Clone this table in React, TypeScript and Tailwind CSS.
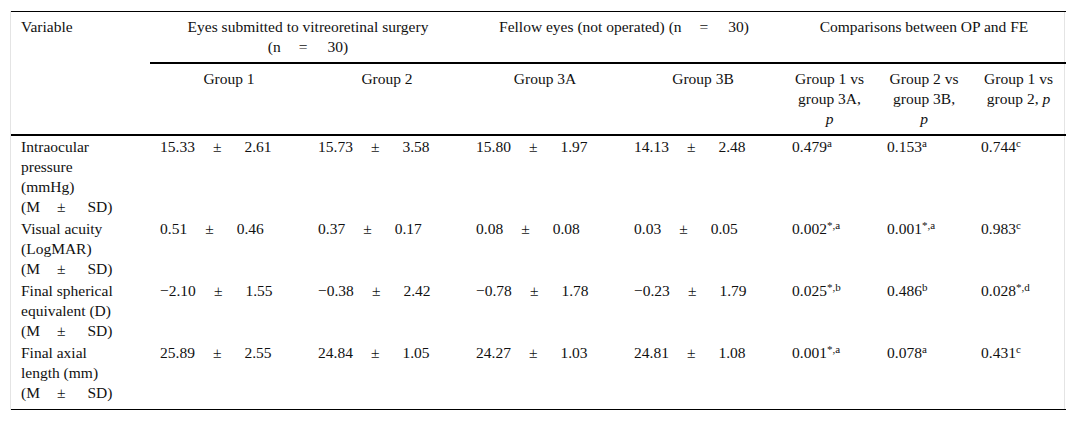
import React from 'react';

type Cell = { mean: string; sd: string };

interface Row {
  label: string[];
  groups: Cell[];
  pvalues: { value: string; note: string }[];
}

const rows: Row[] = [
  {
    label: ['Intraocular', 'pressure', '(mmHg)'],
    groups: [
      { mean: '15.33', sd: '2.61' },
      { mean: '15.73', sd: '3.58' },
      { mean: '15.80', sd: '1.97' },
      { mean: '14.13', sd: '2.48' },
    ],
    pvalues: [
      { value: '0.479', note: 'a' },
      { value: '0.153', note: 'a' },
      { value: '0.744', note: 'c' },
    ],
  },
  {
    label: ['Visual acuity', '(LogMAR)'],
    groups: [
      { mean: '0.51', sd: '0.46' },
      { mean: '0.37', sd: '0.17' },
      { mean: '0.08', sd: '0.08' },
      { mean: '0.03', sd: '0.05' },
    ],
    pvalues: [
      { value: '0.002', note: '*,a' },
      { value: '0.001', note: '*,a' },
      { value: '0.983', note: 'c' },
    ],
  },
  {
    label: ['Final spherical', 'equivalent (D)'],
    groups: [
      { mean: '\u22122.10', sd: '1.55' },
      { mean: '\u22120.38', sd: '2.42' },
      { mean: '\u22120.78', sd: '1.78' },
      { mean: '\u22120.23', sd: '1.79' },
    ],
    pvalues: [
      { value: '0.025', note: '*,b' },
      { value: '0.486', note: 'b' },
      { value: '0.028', note: '*,d' },
    ],
  },
  {
    label: ['Final axial', 'length (mm)'],
    groups: [
      { mean: '25.89', sd: '2.55' },
      { mean: '24.84', sd: '1.05' },
      { mean: '24.27', sd: '1.03' },
      { mean: '24.81', sd: '1.08' },
    ],
    pvalues: [
      { value: '0.001', note: '*,a' },
      { value: '0.078', note: 'a' },
      { value: '0.431', note: 'c' },
    ],
  },
];

// mean ± SD, with the wide gaps the source table uses
const MeanPmSd = ({ mean, sd }: Cell) => (
  <span className="whitespace-nowrap">
    {mean}
    <span className="ml-[18px]">±</span>
    <span className="ml-[23px]">{sd}</span>
  </span>
);

const MeanSd = () => (
  <span className="whitespace-nowrap">
    (M<span className="ml-[17px]">±</span>
    <span className="ml-[22px]">SD)</span>
  </span>
);

const N30 = () => (
  <span className="whitespace-nowrap">
    (n<span className="ml-[18px]">=</span>
    <span className="ml-[20px]">30)</span>
  </span>
);

const head = 'px-[10px] pt-[5px] pb-[5px] align-top font-normal border-b-2 border-black';

export default function App() {
  return (
    <div className="min-h-screen bg-white pt-[11px] pl-[10px] font-['Liberation_Serif','Times_New_Roman',serif] text-[15.5px] leading-[20px] text-[#111]">
      <div className="w-[1055px] border-x border-[#e4e4e4]">
        <table className="w-full table-fixed border-collapse border-y border-black">
          <colgroup>
            <col className="w-[139px]" />
            <col className="w-[158px]" />
            <col className="w-[158px]" />
            <col className="w-[158px]" />
            <col className="w-[158px]" />
            <col className="w-[95px]" />
            <col className="w-[94px]" />
            <col className="w-[95px]" />
          </colgroup>
          <thead>
            <tr>
              <th rowSpan={2} className={`${head} text-left`}>
                Variable
              </th>
              <th colSpan={2} className={`${head} text-center`}>
                Eyes submitted to vitreoretinal surgery
                <br />
                <N30 />
              </th>
              <th colSpan={2} className={`${head} text-center`}>
                Fellow eyes (not operated) <N30 />
              </th>
              <th colSpan={3} className={`${head} text-center`}>
                Comparisons between OP and FE
              </th>
            </tr>
            <tr>
              {['Group 1', 'Group 2', 'Group 3A', 'Group 3B'].map((g) => (
                <th key={g} className={`${head} text-center`}>
                  {g}
                </th>
              ))}
              <th className={`${head} !px-[2px] text-center`}>
                Group 1 vs
                <br />
                group 3A,
                <br />
                <i>p</i>
              </th>
              <th className={`${head} !px-[2px] text-center`}>
                Group 2 vs
                <br />
                group 3B,
                <br />
                <i>p</i>
              </th>
              <th className={`${head} !px-[2px] text-center`}>
                Group 1 vs
                <br />
                group 2, <i>p</i>
              </th>
            </tr>
          </thead>
          <tbody>
            {rows.map((row, i) => {
              const pad = i === rows.length - 1 ? 'pt-px pb-[6px]' : 'py-px';
              return (
                <tr key={i}>
                  <td className={`${pad} px-[10px] align-top`}>
                    {row.label.map((l) => (
                      <div key={l} className="whitespace-nowrap">{l}</div>
                    ))}
                    <div>
                      <MeanSd />
                    </div>
                  </td>
                  {row.groups.map((c, j) => (
                    <td key={j} className={`${pad} px-[10px] align-top`}>
                      <MeanPmSd mean={c.mean} sd={c.sd} />
                    </td>
                  ))}
                  {row.pvalues.map((p, j) => (
                    <td key={j} className={`${pad} px-[10px] align-top whitespace-nowrap`}>
                      {p.value}
                      <sup className="text-[11px]">{p.note}</sup>
                    </td>
                  ))}
                </tr>
              );
            })}
          </tbody>
        </table>
      </div>
    </div>
  );
}
